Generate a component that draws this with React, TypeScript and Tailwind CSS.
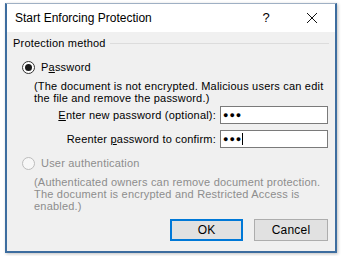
import React from 'react'

const font = { fontFamily: '"Liberation Sans", Arial, sans-serif' }

function Radio({ checked, disabled }: { checked?: boolean; disabled?: boolean }) {
    return (
        <span
            className={
                'flex items-center justify-center w-[13px] h-[13px] rounded-full border ' +
                (disabled ? 'border-[#bcbcbc] bg-[#f7f7f7]' : 'border-[#333333] bg-white')
            }
        >
            {checked && <span className="w-[7px] h-[7px] rounded-full bg-[#1a1a1a]" />}
        </span>
    )
}

function PasswordBox({ caret }: { caret?: boolean }) {
    return (
        <div className="w-[108px] h-[18px] bg-white border border-[#7a7a7a] flex items-center pl-[2px]">
            <span className="text-[9px] leading-none tracking-[1px] text-black">●●●</span>
            {caret && <span className="w-px h-[12px] bg-black" />}
        </div>
    )
}

export default function App() {
    return (
        <div className="w-[342px] h-[256px] bg-white overflow-hidden text-[11px] leading-[12px] text-black" style={font}>
            <div className="ml-[5px] mt-[3px] w-[332px] h-[250px] border-x-2 border-b-2 border-t border-x-[#3d6d9f] border-b-[#3d6d9f] border-t-[#9fb0c4] flex flex-col shadow-[1px_1px_3px_rgba(0,0,0,0.25)]">
                {/* Title bar */}
                <div className="h-[28px] bg-white flex items-center pl-[8px] shrink-0">
                    <span className="text-[12px] flex-1">Start Enforcing Protection</span>
                    <span className="w-[12px] text-center text-[13px] mr-[34px]">?</span>
                    <svg width="12" height="12" viewBox="0 0 12 12" className="mr-[17px]">
                        <path d="M1 1L11 11M11 1L1 11" stroke="#111" strokeWidth="1" />
                    </svg>
                </div>

                {/* Body */}
                <div className="flex-1 bg-[#f0f0f0] pt-[5px] pl-[6px] pr-[6px] flex flex-col tracking-[0.2px]">
                    <div className="flex items-center gap-[4px]">
                        <span>Protection method</span>
                        <span className="flex-1 h-px bg-[#dcdcdc]" />
                    </div>

                    <div className="mt-[11px] ml-[9px] flex items-center gap-[6px] h-[14px]">
                        <Radio checked />
                        <span>
                            P<u>a</u>ssword
                        </span>
                    </div>

                    <div className="mt-[6px] ml-[21px]">
                        <div>(The document is not encrypted. Malicious users can edit</div>
                        <div>the file and remove the password.)</div>
                    </div>

                    <div className="mt-[2px] flex items-center justify-end gap-[4px] pr-[1px]">
                        <span>
                            <u>E</u>nter new password (optional):
                        </span>
                        <PasswordBox />
                    </div>
                    <div className="mt-[6px] flex items-center justify-end gap-[4px] pr-[1px]">
                        <span>
                            Reenter <u>p</u>assword to confirm:
                        </span>
                        <PasswordBox caret />
                    </div>

                    <div className="mt-[8px] ml-[9px] flex items-center gap-[6px] h-[14px] text-[#8d8d8d]">
                        <Radio disabled />
                        <span>User authentication</span>
                    </div>

                    <div className="mt-[6px] ml-[21px] text-[#8d8d8d]">
                        <div>(Authenticated owners can remove document protection.</div>
                        <div>The document is encrypted and Restricted Access is</div>
                        <div>enabled.)</div>
                    </div>

                    <div className="mt-[7px] flex justify-end gap-[11px] pr-[1px]">
                        <button className="w-[73px] h-[22px] bg-[#e1e1e1] border-2 border-[#0078d7] text-[12px]">OK</button>
                        <button className="w-[74px] h-[22px] bg-[#e1e1e1] border border-[#adadad] text-[12px]">Cancel</button>
                    </div>
                </div>
            </div>
        </div>
    )
}
